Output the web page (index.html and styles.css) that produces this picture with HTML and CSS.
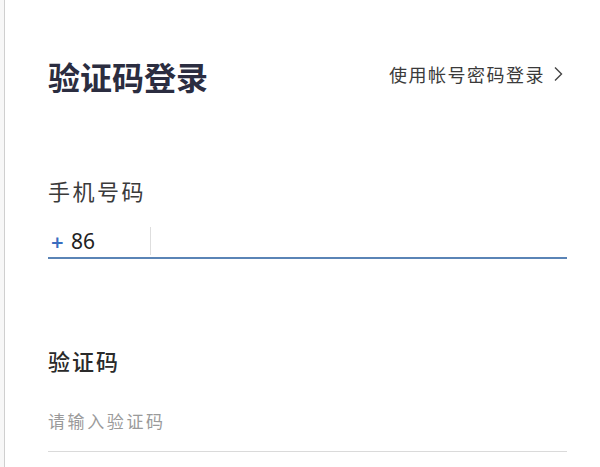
FILE: index.html
```html
<!DOCTYPE html>
<html lang="zh-CN">
<head>
<meta charset="utf-8">
<title>验证码登录</title>
<link rel="stylesheet" href="styles.css">
</head>
<body>
<div class="screen">
  <div class="edge"></div>
  <main class="panel">
    <header class="head">
      <h1 class="title">验证码登录</h1>
      <a class="switch" href="#">使用帐号密码登录<svg class="chev" viewBox="0 0 10 16" width="10" height="16"><polyline points="2,1.5 8.5,8 2,14.5" fill="none" stroke="#444" stroke-width="1.4"/></svg></a>
    </header>
    <section class="field phone">
      <div class="label">手机号码</div>
      <div class="input-row active">
        <span class="code"><span class="plus">+</span><span class="num">86</span></span>
        <span class="sep"></span>
      </div>
    </section>
    <section class="field sms">
      <div class="label strong">验证码</div>
      <div class="input-row plain">
        <span class="ph">请输入验证码</span>
      </div>
    </section>
  </main>
</div>
</body>
</html>
```
FILE: styles.css
```css
html, body {
  margin: 0;
  padding: 0;
  background: #ffffff;
}
body {
  font-family: "Noto Sans CJK SC", "Noto Sans", sans-serif;
  color: #333;
}
.screen {
  display: flex;
  width: 600px;
  height: 467px;
  overflow: hidden;
}
.edge {
  width: 4px;
  flex: none;
  border-right: 1px solid #cfcfcf;
  background: #f7f7f7;
}
.panel {
  flex: 1;
  padding: 56px 33px 0 43px;
}
.head {
  display: flex;
  justify-content: space-between;
  align-items: center;
  height: 40px;
}
.title {
  margin: 0;
  font-size: 32px;
  line-height: 40px;
  font-weight: 700;
  color: #2b2d40;
}
.switch {
  display: flex;
  align-items: center;
  gap: 8px;
  font-size: 18px;
  line-height: 24px;
  letter-spacing: 1.5px;
  color: #3a3a3a;
  text-decoration: none;
  margin: -4px 4px 0 0;
}
.chev {
  display: block;
}
.field .label {
  font-size: 22px;
  line-height: 28px;
  letter-spacing: 2.5px;
  color: #3a3a3a;
}
.phone {
  margin-top: 80px;
}
.sms {
  margin-top: 87px;
}
.label.strong {
  color: #2a2a2a;
  font-weight: 500;
  letter-spacing: 2px;
}
.input-row {
  display: flex;
  align-items: center;
  margin-top: 20px;
  height: 33px;
  border-bottom: 2px solid #5a84b6;
}
.code {
  display: flex;
  align-items: center;
  width: 99px;
  padding-left: 3px;
  font-family: "Noto Sans", "Liberation Sans", sans-serif;
}
.plus {
  color: #3a6dbf;
  font-size: 22px;
  font-weight: 600;
  width: 20px;
}
.num {
  font-size: 21px;
  color: #222;
}
.sep {
  width: 1px;
  height: 28px;
  background: #dedede;
}
.input-row.plain {
  height: auto;
  margin-top: 22px;
  padding: 13px 0 18px;
  border-bottom: 1px solid #dadada;
}
.ph {
  font-size: 17px;
  line-height: 24px;
  letter-spacing: 2.6px;
  color: #9a9a9a;
}
```
